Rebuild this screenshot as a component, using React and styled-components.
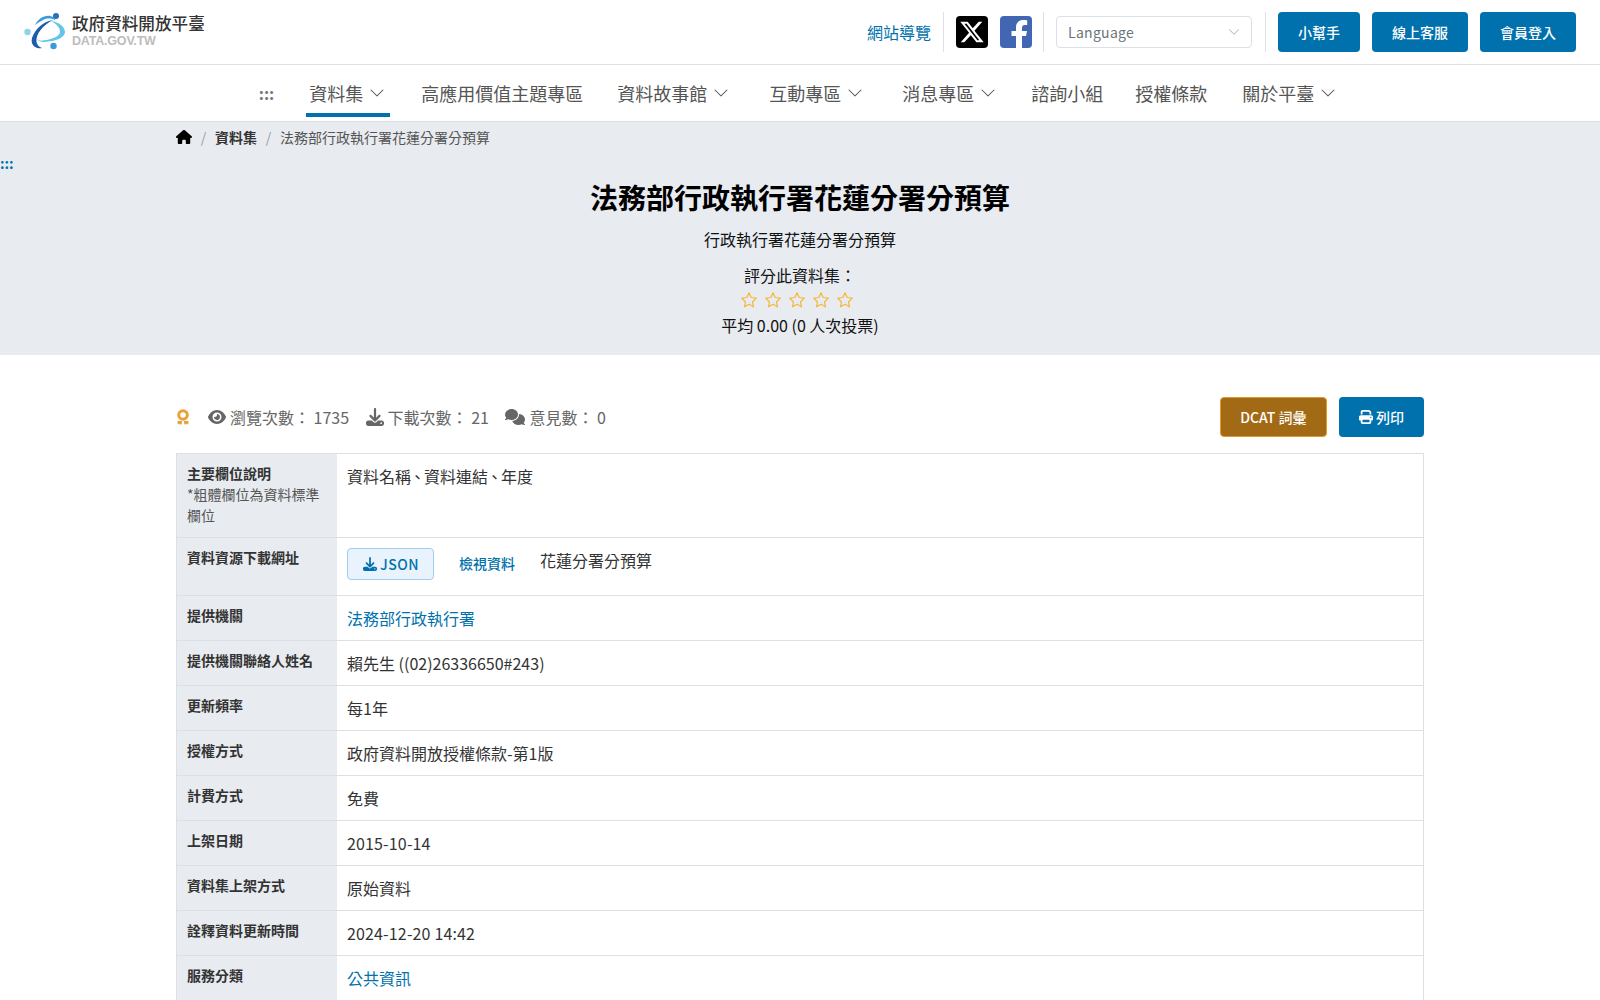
import React from "react";
import styled, { createGlobalStyle } from "styled-components";
import { FaEye, FaDownload, FaComments, FaPrint, FaHouse } from "react-icons/fa6";
import { BsChevronDown } from "react-icons/bs";

const primary = "#0071ad";
const line = "#dcdfe6";
const shade = "#e8ebf0";

const GlobalStyle = createGlobalStyle`
    html, body {
        margin: 0;
        padding: 0;
        background: #fff;
        color: #333;
        font-family: "Noto Sans CJK TC", "Noto Sans", sans-serif;
        font-size: 16px;
    }
    * {
        box-sizing: border-box;
    }
`;

const TopBar = styled.header`
    height: 65px;
    border-bottom: 1px solid ${line};
    display: flex;
    align-items: center;
    justify-content: space-between;
    padding: 0 24px 1px;
`;
const Logo = styled.div`
    display: flex;
    align-items: center;
    gap: 6px;
`;
const LogoText = styled.div`
    display: flex;
    flex-direction: column;
    margin-top: -2px;
`;
const LogoName = styled.span`
    font-size: 16.6px;
    line-height: 20px;
    font-weight: 500;
    color: #333;
`;
const LogoUrl = styled.span`
    font-family: "Liberation Sans", sans-serif;
    font-size: 12.5px;
    line-height: 14px;
    font-weight: 700;
    color: #bdbdbd;
    letter-spacing: -0.2px;
    margin-top: 1px;
`;
const TopRight = styled.div`
    display: flex;
    align-items: center;
    height: 40px;
`;
const SiteMap = styled.a`
    color: ${primary};
    font-size: 16px;
    margin-right: 12px;
`;
const VLine = styled.span`
    width: 1px;
    height: 40px;
    background: ${line};
    margin-right: 12px;
`;
const Social = styled.a`
    width: 32px;
    height: 32px;
    border-radius: 4px;
    background: ${(p) => p.$bg};
    display: flex;
    align-items: center;
    justify-content: center;
    margin-right: ${(p) => p.$mr || 12}px;
    overflow: hidden;
`;
const LangSelect = styled.div`
    width: 196px;
    height: 32px;
    border: 1px solid ${line};
    border-radius: 4px;
    display: flex;
    align-items: center;
    justify-content: space-between;
    padding: 0 11px 0 11px;
    font-size: 14px;
    letter-spacing: 0.3px;
    color: #6c757d;
    margin-right: 13px;
`;
const ActionGroup = styled.div`
    display: flex;
    gap: 12px;
`;
const Button = styled.a`
    height: 40px;
    padding: 0 20px;
    border-radius: 4px;
    background: ${primary};
    color: #fff;
    font-size: 14px;
    font-weight: 500;
    display: flex;
    align-items: center;
    justify-content: center;
    gap: 3px;
`;
const GoldButton = styled(Button)`
    padding: 0 19.5px;
    background: #a36a16;
    border: 1px solid #e09a2d;
`;

const Nav = styled.nav`
    height: 57px;
    border-bottom: 1px solid ${line};
    display: flex;
    align-items: flex-start;
    justify-content: center;
    color: #555;
    font-size: 18px;
`;
const Dots = styled.span`
    color: ${(p) => p.$color || "#777"};
    font-size: ${(p) => p.$size || 16}px;
    font-weight: 700;
    line-height: 1;
`;
const NavDots = styled(Dots)`
    margin: 20px 32px 0 0;
`;
const NavItem = styled.a`
    height: 52px;
    display: flex;
    align-items: center;
    gap: 6px;
    padding: 8px 3px 0;
    margin-right: ${(p) => p.$mr || 0}px;
    border-bottom: 4px solid ${(p) => (p.$active ? primary : "transparent")};
`;
const Chevron = styled(BsChevronDown)`
    font-size: 16px;
    margin-right: 2px;
`;

const Hero = styled.section`
    background: ${shade};
    height: 233px;
    display: flex;
    flex-direction: column;
    align-items: center;
    color: #111;
`;
const Crumbs = styled.div`
    width: 1248px;
    height: 30px;
    display: flex;
    align-items: center;
    gap: 8.75px;
    font-size: 14px;
    color: #555;
`;
const CrumbSep = styled.span`
    color: #9aa0a6;
`;
const CrumbBold = styled.b`
    color: #333;
    font-weight: 700;
`;
const HeroDots = styled(Dots)`
    align-self: flex-start;
    height: 21px;
    margin-top: 4px;
`;
const Title = styled.h1`
    margin: 0;
    font-size: 28px;
    line-height: 40px;
    font-weight: 700;
    color: #000;
`;
const SubTitle = styled.p`
    margin: 10px 0 0;
    font-size: 16px;
    line-height: 24px;
`;
const RateLabel = styled.div`
    margin-top: 12px;
    font-size: 16px;
    line-height: 24px;
`;
const Stars = styled.div`
    display: flex;
    gap: 6.2px;
    height: 24px;
    margin: 1px 6px 0 0;
    align-items: center;
`;
const Average = styled.div`
    font-size: 16px;
    line-height: 24px;
    margin-top: 1px;
`;

const Main = styled.main`
    width: 1248px;
    margin: 0 auto;
`;
const StatsRow = styled.div`
    display: flex;
    align-items: center;
    justify-content: space-between;
    height: 40px;
    margin: 42px 0 16px;
`;
const Stats = styled.div`
    display: flex;
    align-items: center;
    color: #666;
    font-size: 16px;
`;
const Stat = styled.span`
    display: flex;
    align-items: center;
    gap: 4px;
    margin-right: 16.5px;
    svg {
        font-size: ${(p) => p.$icon || 18}px;
    }
`;
const MedalMark = styled.svg`
    margin-right: 18px;
`;
const StatButtons = styled.div`
    display: flex;
    gap: 12px;
`;

const Table = styled.div`
    border: 1px solid ${line};
    border-bottom: 0;
`;
const Row = styled.div`
    display: grid;
    grid-template-columns: 160px 1fr;
    min-height: ${(p) => p.$h || 45}px;
    border-bottom: 1px solid ${line};
`;
const Head = styled.div`
    background: ${shade};
    padding: 9px 10px;
    font-size: 14px;
    line-height: 21px;
    color: #555;
`;
const HeadTitle = styled.div`
    font-weight: 700;
    color: #333;
`;
const Cell = styled.div`
    padding: 10px;
    font-size: 16px;
    line-height: 24px;
    color: #333;
    display: flex;
    align-items: flex-start;
`;
const CellLink = styled.a`
    color: ${primary};
`;
const Stamp = styled.span`
    letter-spacing: 0.15px;
`;
const Comma = styled.span`
    margin: 0 -1.5px;
`;
const JsonButton = styled.a`
    height: 32px;
    padding: 0 14px 0 15px;
    border: 1px solid #9fcdf2;
    border-radius: 4px;
    background: #e9f3fd;
    color: ${primary};
    font-size: 14px;
    font-weight: 500;
    letter-spacing: 0.5px;
    display: flex;
    align-items: center;
    gap: 3px;
`;
const ViewLink = styled.a`
    color: ${primary};
    font-size: 14px;
    font-weight: 500;
    margin: 3px 25px 0;
`;

const Star = () => (
    <svg width="18" height="18" viewBox="0 0 24 24" fill="none" stroke="#f4b93c" strokeWidth="1.6" strokeLinejoin="round">
        <path d="M12 2.500l2.900 6.200 6.800.9-5 4.700 1.300 6.800-6-3.400-6 3.400 1.300-6.800-5-4.700 6.800-.9z" />
    </svg>
);

const Medal = () => (
    <MedalMark width="14" height="17" viewBox="0 0 14 17" fill="none">
        <circle cx="7" cy="6" r="4.300" stroke="#e9a23b" strokeWidth="3" />
        <path d="M1.500 12h4.500v2l-1 2-1.300-1.200-2 .6zM12.500 12H8v2l1 2 1.300-1.200 2 .6z" fill="#e9a23b" />
    </MedalMark>
);

const LogoMark = () => (
    <svg width="42" height="40" viewBox="0 0 42 40" fill="none">
        <path d="M29 8C20 9 11 17 8 26c-1 4 0 7 3 9 2.500 1.500 5 1.500 7 1-3-1-5-3-5.500-6C11.500 22 19 13 29 8z" fill="#1d5cab" />
        <path d="M11 13C14 7 20 3 26 4c3 .5 5 2 5.500 4.500C28 6 23 6 19 8c-3 1.500-6 3.500-8 5z" fill="#3a9bdb" />
        <path d="M27 9c8 1 14 6 14 11 0 6-12 11-24 9 6-1 19-3 19-9.500 0-4-4-8-9-10.500z" fill="#62c6ea" />
        <path d="M12 27c4 2 9 2.500 14 1-4 2.500-9 3-14-1z" fill="#62c6ea" />
        <circle cx="32" cy="4" r="3" fill="#2a6fba" />
        <circle cx="3.500" cy="20" r="3.200" fill="#8ad4f0" />
        <circle cx="29.500" cy="34" r="3.200" fill="#3b9ad9" />
    </svg>
);

const XMark = () => (
    <svg width="26" height="26" viewBox="0 0 24 24" fill="#fff">
        <path d="M18.200 2.500h3.300l-7.200 8.300 8.500 10.700h-6.700l-5.200-6.600-6 6.600H1.600l7.700-8.800L1.200 2.500H8l4.700 6.100zm-1.200 17h1.800L7 4.300H5z" />
    </svg>
);

const FbMark = () => (
    <svg width="32" height="32" viewBox="0 0 32 32" fill="#fff">
        <path d="M22 32V20h4l1-5h-5v-3c0-1.800.8-3 3-3h2.200V4.300C26.400 4.200 24.800 4 23.300 4 19 4 16 6.600 16 11.400V15h-4.500v5H16v12z" />
    </svg>
);

const rows = [
    ["提供機關", <CellLink>法務部行政執行署</CellLink>],
    ["提供機關聯絡人姓名", "賴先生 ((02)26336650#243)"],
    ["更新頻率", "每1年"],
    ["授權方式", "政府資料開放授權條款-第1版"],
    ["計費方式", "免費"],
    ["上架日期", <Stamp>2015-10-14</Stamp>],
    ["資料集上架方式", "原始資料"],
    ["詮釋資料更新時間", <Stamp>2024-12-20 14:42</Stamp>],
    ["服務分類", <CellLink>公共資訊</CellLink>],
];

const navItems = [
    { label: "高應用價值主題專區", mr: 28 },
    { label: "資料故事館", drop: true, mr: 32 },
    { label: "互動專區", drop: true, mr: 31 },
    { label: "消息專區", drop: true, mr: 27 },
    { label: "諮詢小組", mr: 26 },
    { label: "授權條款", mr: 29 },
    { label: "關於平臺", drop: true },
];

export default function App() {
    return (
        <>
            <GlobalStyle />
            <TopBar>
                <Logo>
                    <LogoMark />
                    <LogoText>
                        <LogoName>政府資料開放平臺</LogoName>
                        <LogoUrl>DATA.GOV.TW</LogoUrl>
                    </LogoText>
                </Logo>
                <TopRight>
                    <SiteMap>網站導覽</SiteMap>
                    <VLine />
                    <Social $bg="#000"><XMark /></Social>
                    <Social $bg="#4267b2" $mr={11}><FbMark /></Social>
                    <VLine />
                    <LangSelect>
                        Language
                        <BsChevronDown color="#a9afb8" size={12} />
                    </LangSelect>
                    <VLine />
                    <ActionGroup>
                        <Button>小幫手</Button>
                        <Button>線上客服</Button>
                        <Button>會員登入</Button>
                    </ActionGroup>
                </TopRight>
            </TopBar>
            <Nav>
                <NavDots>:::</NavDots>
                <NavItem $active $mr={28}>資料集<Chevron /></NavItem>
                {navItems.map((item) => (
                    <NavItem key={item.label} $mr={item.mr}>
                        {item.label}
                        {item.drop && <Chevron />}
                    </NavItem>
                ))}
            </Nav>
            <Hero>
                <Crumbs>
                    <FaHouse color="#000" size={16} />
                    <CrumbSep>/</CrumbSep>
                    <CrumbBold>資料集</CrumbBold>
                    <CrumbSep>/</CrumbSep>
                    法務部行政執行署花蓮分署分預算
                </Crumbs>
                <HeroDots $color={primary} $size={14}>:::</HeroDots>
                <Title>法務部行政執行署花蓮分署分預算</Title>
                <SubTitle>行政執行署花蓮分署分預算</SubTitle>
                <RateLabel>評分此資料集：</RateLabel>
                <Stars>
                    {[0, 1, 2, 3, 4].map((i) => <Star key={i} />)}
                </Stars>
                <Average>平均 0.00 (0 人次投票)</Average>
            </Hero>
            <Main>
                <StatsRow>
                    <Stats>
                        <Medal />
                        <Stat><FaEye />瀏覽次數： 1735</Stat>
                        <Stat><FaDownload />下載次數： 21</Stat>
                        <Stat $icon={20}><FaComments />意見數： 0</Stat>
                    </Stats>
                    <StatButtons>
                        <GoldButton>DCAT 詞彙</GoldButton>
                        <Button><FaPrint />列印</Button>
                    </StatButtons>
                </StatsRow>
                <Table>
                    <Row $h={84}>
                        <Head>
                            <HeadTitle>主要欄位說明</HeadTitle>
                            *粗體欄位為資料標準欄位
                        </Head>
                        <Cell>
                            <span>資料名稱<Comma>、</Comma>資料連結<Comma>、</Comma>年度</span>
                        </Cell>
                    </Row>
                    <Row $h={58}>
                        <Head><HeadTitle>資料資源下載網址</HeadTitle></Head>
                        <Cell>
                            <JsonButton><FaDownload />JSON</JsonButton>
                            <ViewLink>檢視資料</ViewLink>
                            花蓮分署分預算
                        </Cell>
                    </Row>
                    {rows.map(([head, value]) => (
                        <Row key={head}>
                            <Head><HeadTitle>{head}</HeadTitle></Head>
                            <Cell>{value}</Cell>
                        </Row>
                    ))}
                </Table>
            </Main>
        </>
    );
}
